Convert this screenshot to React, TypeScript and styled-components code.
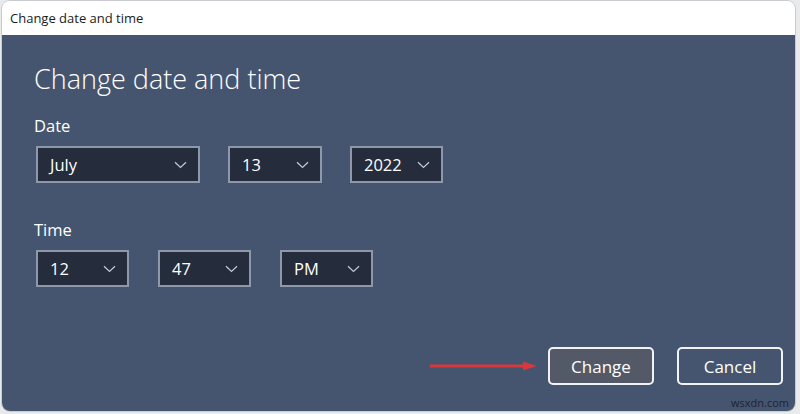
import styled, { createGlobalStyle } from "styled-components";

const GlobalStyle = createGlobalStyle`
    html, body {
        margin: 0;
        padding: 0;
        background: #e9eaec;
    }
    body {
        font-family: "Open Sans", "Noto Sans", sans-serif;
    }
`;

const WindowFrame = styled.div({
    position: 'relative',
    margin: '1px 5px 3px 2px',
    height: 410,
    borderRadius: 8,
    overflow: 'hidden',
    display: 'flex',
    flexDirection: 'column',
    boxShadow: '0 0 0 1px #c9cbd0',
});

const TitleBar = styled.div({
    height: 34,
    flexShrink: 0,
    background: '#ffffff',
    display: 'flex',
    alignItems: 'center',
    paddingLeft: 8,
    fontSize: 13,
    color: '#1b1b1b',
});

const DialogBody = styled.div({
    flex: 1,
    background: '#45556f',
    color: '#ffffff',
    display: 'flex',
    flexDirection: 'column',
    padding: '24px 12px 26px 32px',
});

const Heading = styled.h1({
    margin: 0,
    fontSize: 27,
    fontWeight: 300,
    lineHeight: '40px',
});

const FieldLabel = styled.div<{ $gap: number }>(({ $gap }) => ({
    marginTop: $gap,
    fontSize: 16.5,
    lineHeight: '20px',
}));

const SelectRow = styled.div<{ $gap: number }>(({ $gap }) => ({
    display: 'flex',
    gap: $gap,
    marginTop: 10,
    paddingLeft: 2,
}));

const SelectBox = styled.div<{ $width: number }>(({ $width }) => ({
    boxSizing: 'border-box',
    width: $width,
    height: 37,
    border: '2px solid #8d98ab',
    background: '#252c3c',
    display: 'flex',
    alignItems: 'center',
    justifyContent: 'space-between',
    padding: '0 11px 0 12px',
    fontSize: 16.5,
    color: '#ffffff',
}));

const Footer = styled.div({
    marginTop: 'auto',
    display: 'flex',
    alignItems: 'center',
    justifyContent: 'flex-end',
});

const ArrowMark = styled.svg({
    marginRight: 10,
});

const DialogButton = styled.button<{ $primary?: boolean }>(({ $primary }) => ({
    boxSizing: 'border-box',
    width: 106,
    height: 38,
    marginLeft: $primary ? 0 : 23,
    borderRadius: 5,
    border: '2px solid #f2f3f5',
    background: $primary ? '#535966' : 'transparent',
    color: '#ffffff',
    fontFamily: 'inherit',
    fontSize: 17,
    padding: 0,
}));

const Watermark = styled.div({
    position: 'absolute',
    right: 6,
    bottom: 1,
    fontSize: 11,
    color: '#1d2330',
});

const Chevron = () => (
    <svg width="13" height="8" viewBox="0 0 13 8">
        <path d="M1 1.2 L6.5 6.5 L12 1.2" fill="none" stroke="#c4c9d3" strokeWidth="1.2" />
    </svg>
);

type SelectProps = {
    value: string;
    width: number;
};

const Select = ({ value, width }: SelectProps) => (
    <SelectBox $width={width}>
        <span>{value}</span>
        <Chevron />
    </SelectBox>
);

export default function App() {
    return <>
        <GlobalStyle />
        <WindowFrame>
            <TitleBar>Change date and time</TitleBar>
            <DialogBody>
                <Heading>Change date and time</Heading>
                <FieldLabel $gap={17}>Date</FieldLabel>
                <SelectRow $gap={28}>
                    <Select value="July" width={164} />
                    <Select value="13" width={94} />
                    <Select value="2022" width={93} />
                </SelectRow>
                <FieldLabel $gap={37}>Time</FieldLabel>
                <SelectRow $gap={29}>
                    <Select value="12" width={93} />
                    <Select value="47" width={93} />
                    <Select value="PM" width={93} />
                </SelectRow>
                <Footer>
                    <ArrowMark width="108" height="10" viewBox="0 0 108 10">
                        <path d="M0 5 L96 5" stroke="#d8383a" strokeWidth="3" />
                        <path d="M93 0.5 L107 5 L93 9.5 Z" fill="#d8383a" />
                    </ArrowMark>
                    <DialogButton $primary>Change</DialogButton>
                    <DialogButton>Cancel</DialogButton>
                </Footer>
            </DialogBody>
            <Watermark>wsxdn.com</Watermark>
        </WindowFrame>
    </>;
}
